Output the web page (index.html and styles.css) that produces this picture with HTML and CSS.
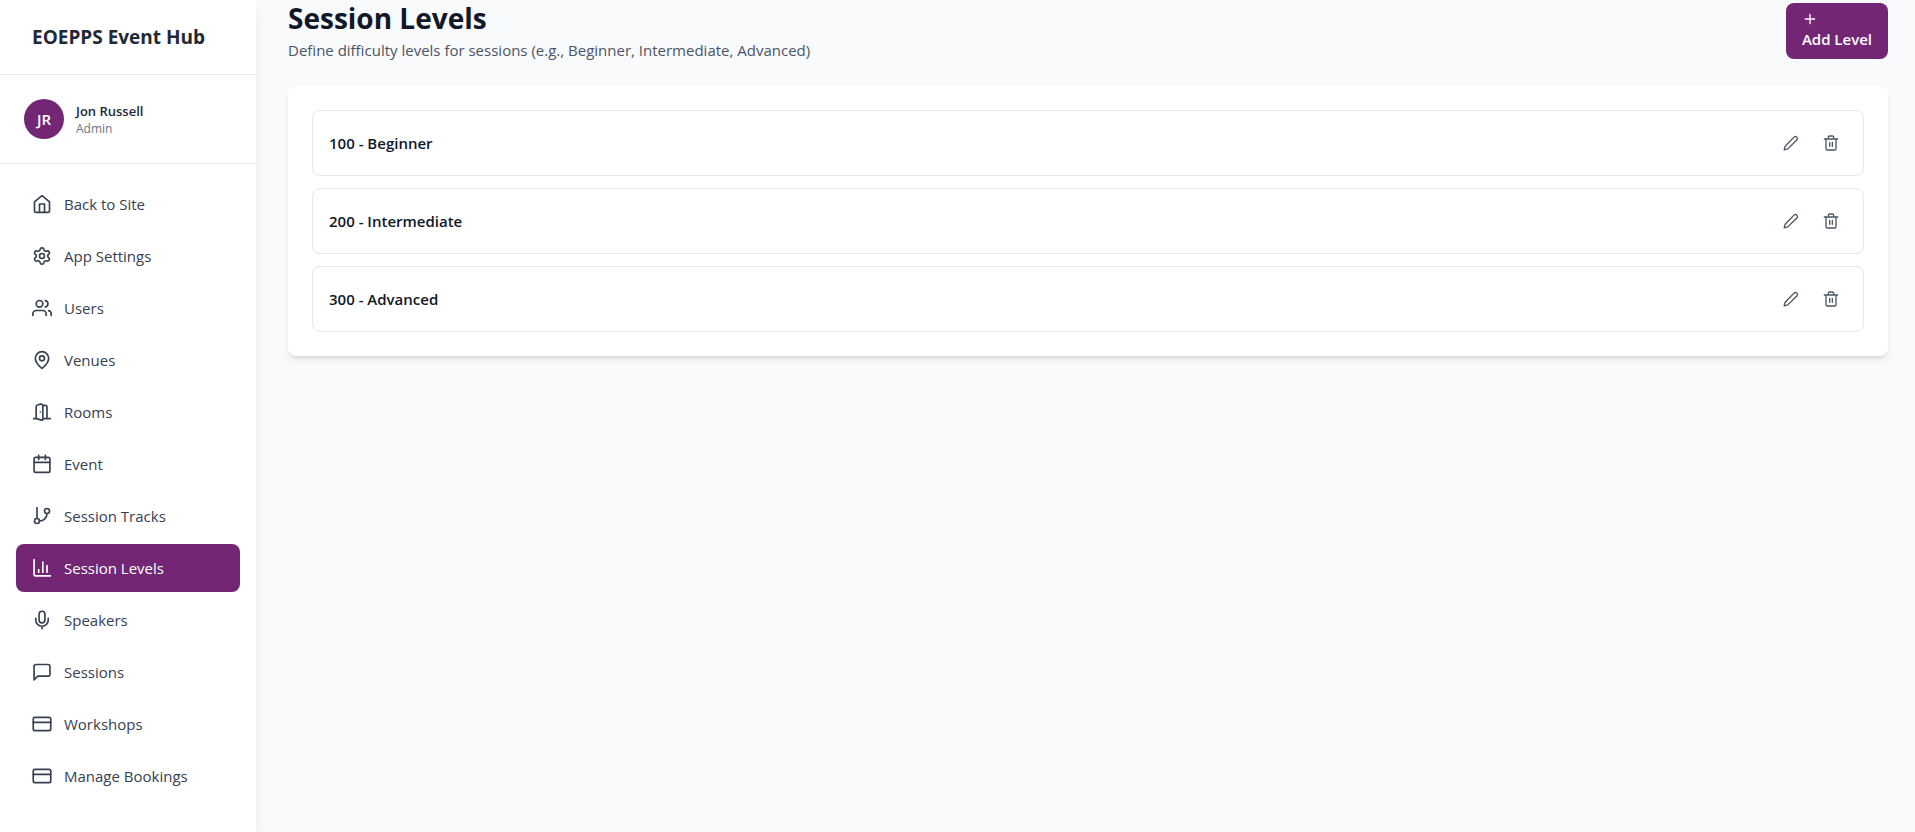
FILE: index.html
```html
<!DOCTYPE html>
<html lang="en">
<head>
    <meta charset="UTF-8">
    <meta name="viewport" content="width=device-width, initial-scale=1.0">
    <title>Session Levels - EOEPPS Event Hub</title>
    <link rel="stylesheet" href="styles.css">
</head>
<body>
    <svg class="sprite" aria-hidden="true">
        <symbol id="icon-card" viewBox="0 0 24 24">
            <rect x="1.5" y="4" width="21" height="16" rx="2" />
            <path d="M1.5 10h21" />
        </symbol>
        <symbol id="icon-pencil" viewBox="0 0 24 24">
            <path d="M16.5 3.2a2.9 2.9 0 0 1 4.2 4.2L7.2 20.8 1.8 22.2l1.4-5.4L16.5 3.2z" />
        </symbol>
        <symbol id="icon-trash" viewBox="0 0 24 24">
            <path d="M2 6h20M19.5 6v14.5a2 2 0 0 1-2 2h-11a2 2 0 0 1-2-2V6M8 6V3.5a2 2 0 0 1 2-2h4a2 2 0 0 1 2 2V6M10 11v6M14 11v6" />
        </symbol>
    </svg>

    <div class="layout">
        <aside class="sidebar">
            <div class="brand">
                <h2>EOEPPS Event Hub</h2>
            </div>
            <div class="user">
                <div class="avatar">JR</div>
                <div class="user-info">
                    <p class="user-name">Jon Russell</p>
                    <p class="user-role">Admin</p>
                </div>
            </div>
            <nav class="nav">
                <a href="#">
                    <svg class="icon" viewBox="0 0 24 24"><path d="M3 9.5 12 2l9 7.5V20a2 2 0 0 1-2 2H5a2 2 0 0 1-2-2z" /><path d="M9 22V12h6v10" /></svg>
                    Back to Site
                </a>
                <a href="#">
                    <svg class="icon" viewBox="0 0 24 24"><path d="M9.7 4.1a2.34 2.34 0 0 1 4.6 0 2.34 2.34 0 0 0 3.4 1.9 2.34 2.34 0 0 1 2.3 4 2.34 2.34 0 0 0 0 4 2.34 2.34 0 0 1-2.3 4 2.34 2.34 0 0 0-3.4 1.9 2.34 2.34 0 0 1-4.6 0 2.34 2.34 0 0 0-3.4-1.9 2.34 2.34 0 0 1-2.3-4 2.34 2.34 0 0 0 0-4 2.34 2.34 0 0 1 2.3-4 2.34 2.34 0 0 0 3.4-1.9z" /><circle cx="12" cy="12" r="3" /></svg>
                    App Settings
                </a>
                <a href="#">
                    <svg class="icon" viewBox="0 0 24 24"><path d="M17 21v-2a4 4 0 0 0-4-4H5a4 4 0 0 0-4 4v2" /><circle cx="9" cy="7" r="4" /><path d="M23 21v-2a4 4 0 0 0-3-3.9M16 3.1a4 4 0 0 1 0 7.8" /></svg>
                    Users
                </a>
                <a href="#">
                    <svg class="icon" viewBox="0 0 24 24"><path d="M20 10c0 5-5.5 10.2-7.4 11.8a1 1 0 0 1-1.2 0C9.5 20.2 4 15 4 10a8 8 0 0 1 16 0z" /><circle cx="12" cy="10" r="3" /></svg>
                    Venues
                </a>
                <a href="#">
                    <svg class="icon" viewBox="0 0 24 24"><path d="M13 4h3a2 2 0 0 1 2 2v14M2 20h3M13 20h9M10 12v.01M13 4.6v16.2a1 1 0 0 1-1.2 1L5 20V5.6a2 2 0 0 1 1.5-2l4-1A2 2 0 0 1 13 4.6z" /></svg>
                    Rooms
                </a>
                <a href="#">
                    <svg class="icon" viewBox="0 0 24 24"><rect x="2.5" y="4" width="19" height="18" rx="2" /><path d="M8 1.5v5M16 1.5v5M2.5 10h19" /></svg>
                    Event
                </a>
                <a href="#">
                    <svg class="icon" viewBox="0 0 24 24"><path d="M6 2v13" /><circle cx="18" cy="6" r="3" /><circle cx="6" cy="18" r="3" /><path d="M18 9a9 9 0 0 1-9 9" /></svg>
                    Session Tracks
                </a>
                <a href="#" class="active" aria-current="page">
                    <svg class="icon" viewBox="0 0 24 24"><path d="M2.5 2v18a1.5 1.5 0 0 0 1.5 1.5h18M8 17v-3M13 17V5M18 17V9" /></svg>
                    Session Levels
                </a>
                <a href="#">
                    <svg class="icon" viewBox="0 0 24 24"><rect x="8.5" y="1.5" width="7" height="14" rx="3.5" /><path d="M19.5 10v2a7.5 7.5 0 0 1-15 0v-2M12 19.5v3" /></svg>
                    Speakers
                </a>
                <a href="#">
                    <svg class="icon" viewBox="0 0 24 24"><path d="M21.5 15a2 2 0 0 1-2 2H7l-4.5 4.5V5a2 2 0 0 1 2-2h15a2 2 0 0 1 2 2z" /></svg>
                    Sessions
                </a>
                <a href="#">
                    <svg class="icon"><use href="#icon-card" /></svg>
                    Workshops
                </a>
                <a href="#">
                    <svg class="icon"><use href="#icon-card" /></svg>
                    Manage Bookings
                </a>
            </nav>
        </aside>

        <main class="content">
            <header class="page-header">
                <div>
                    <h1>Session Levels</h1>
                    <p>Define difficulty levels for sessions (e.g., Beginner, Intermediate, Advanced)</p>
                </div>
                <button type="button" class="add-btn">
                    <svg class="icon-sm" viewBox="0 0 24 24"><path d="M12 5v14M5 12h14" /></svg>
                    Add Level
                </button>
            </header>

            <section class="card">
                <ul class="levels">
                    <li>
                        <h3>100 - Beginner</h3>
                        <div class="actions">
                            <button type="button" aria-label="Edit 100 - Beginner"><svg class="icon-sm"><use href="#icon-pencil" /></svg></button>
                            <button type="button" aria-label="Delete 100 - Beginner"><svg class="icon-sm"><use href="#icon-trash" /></svg></button>
                        </div>
                    </li>
                    <li>
                        <h3>200 - Intermediate</h3>
                        <div class="actions">
                            <button type="button" aria-label="Edit 200 - Intermediate"><svg class="icon-sm"><use href="#icon-pencil" /></svg></button>
                            <button type="button" aria-label="Delete 200 - Intermediate"><svg class="icon-sm"><use href="#icon-trash" /></svg></button>
                        </div>
                    </li>
                    <li>
                        <h3>300 - Advanced</h3>
                        <div class="actions">
                            <button type="button" aria-label="Edit 300 - Advanced"><svg class="icon-sm"><use href="#icon-pencil" /></svg></button>
                            <button type="button" aria-label="Delete 300 - Advanced"><svg class="icon-sm"><use href="#icon-trash" /></svg></button>
                        </div>
                    </li>
                </ul>
            </section>
        </main>
    </div>
</body>
</html>
```
FILE: styles.css
```css
* {
    box-sizing: border-box;
    margin: 0;
    padding: 0;
}

body {
    font-family: 'Open Sans', 'Noto Sans', sans-serif;
    font-size: 15px;
    line-height: 24px;
    color: #111827;
    background: #f9fafc;
}

button {
    font: inherit;
    border: none;
    cursor: pointer;
}

svg {
    fill: none;
    stroke: currentColor;
    stroke-width: 2;
    stroke-linecap: round;
    stroke-linejoin: round;
}

.sprite {
    display: none;
}

.icon {
    width: 20px;
    height: 20px;
    flex-shrink: 0;
}

.icon-sm {
    display: block;
    width: 16px;
    height: 16px;
}

.layout {
    display: flex;
    min-height: 100vh;
}

/* Sidebar */
.sidebar {
    width: 256px;
    flex-shrink: 0;
    background: #fff;
    box-shadow: 0 10px 15px -3px rgba(0, 0, 0, 0.1), 0 4px 6px -4px rgba(0, 0, 0, 0.1);
}

.brand {
    padding: 24px 32px;
    border-bottom: 1px solid #e5e7eb;
}

.brand h2 {
    font-size: 19px;
    line-height: 26px;
    font-weight: 700;
    color: #1f2937;
    white-space: nowrap;
}

.user {
    display: flex;
    align-items: center;
    gap: 12px;
    padding: 24px;
    border-bottom: 1px solid #e5e7eb;
}

.avatar {
    display: flex;
    align-items: center;
    justify-content: center;
    width: 40px;
    height: 40px;
    border-radius: 50%;
    background: #722674;
    color: #fff;
    font-weight: 600;
}

.user-name {
    font-size: 13px;
    line-height: 20px;
    font-weight: 600;
    color: #1f2937;
}

.user-role {
    font-size: 12px;
    line-height: 16px;
    color: #6b7280;
}

.nav {
    display: flex;
    flex-direction: column;
    gap: 4px;
    padding: 16px;
}

.nav a {
    display: flex;
    align-items: center;
    gap: 12px;
    padding: 12px 16px;
    border-radius: 8px;
    color: #374151;
    text-decoration: none;
}

.nav a.active {
    background: #722674;
    color: #fff;
}

/* Page content */
.content {
    flex: 1;
    min-width: 0;
    padding: 0 27px 32px 32px;
}

.page-header {
    display: flex;
    align-items: center;
    justify-content: space-between;
    margin-bottom: 24px;
}

.page-header h1 {
    font-size: 28px;
    line-height: 36px;
    font-weight: 700;
    margin-bottom: 2px;
}

.page-header p {
    color: #4b5563;
}

.add-btn {
    padding: 8px 16px;
    border-radius: 8px;
    background: #722674;
    color: #fff;
    font-weight: 600;
    text-align: left;
}

.card {
    padding: 24px;
    border-radius: 8px;
    background: #fff;
    box-shadow: 0 4px 6px -1px rgba(0, 0, 0, 0.1), 0 2px 4px -2px rgba(0, 0, 0, 0.1);
}

.levels {
    display: flex;
    flex-direction: column;
    gap: 12px;
    list-style: none;
}

.levels li {
    display: flex;
    align-items: center;
    justify-content: space-between;
    padding: 16px;
    border: 1px solid #e5e7eb;
    border-radius: 8px;
}

.levels h3 {
    font-size: 15px;
    font-weight: 600;
}

.actions {
    display: flex;
    gap: 8px;
}

.actions button {
    padding: 8px;
    border-radius: 4px;
    background: transparent;
    color: #4b5563;
}
```
